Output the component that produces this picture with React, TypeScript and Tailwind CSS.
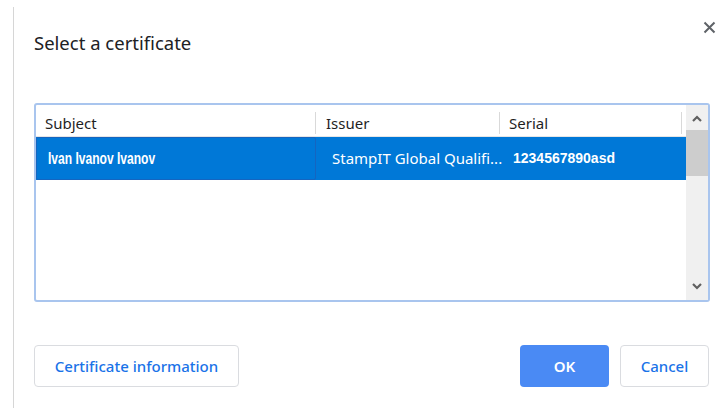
const ui = "font-['Noto_Sans',sans-serif]";

type Cert = { subject: string; issuer: string; serial: string };

const certs: Cert[] = [
  { subject: "Ivan Ivanov Ivanov", issuer: "StampIT Global Qualifi...", serial: "1234567890asd" },
];

function Chevron({ up }: { up?: boolean }) {
  return (
    <svg width="10" height="7" viewBox="0 0 10 7" className="text-[#606060]">
      <path
        d={up ? "M1 6 L5 2 L9 6" : "M1 1 L5 5 L9 1"}
        fill="none"
        stroke="currentColor"
        strokeWidth="2.2"
      />
    </svg>
  );
}

function CloseIcon() {
  return (
    <svg width="13" height="13" viewBox="0 0 13 13" className="text-[#5f6368]">
      <path d="M1.5 1.5 L11.5 11.5 M11.5 1.5 L1.5 11.5" stroke="currentColor" strokeWidth="2" />
    </svg>
  );
}

function CertTable() {
  return (
    <div className="flex h-[199px] w-[676px] overflow-hidden rounded-[3px] border-2 border-[#a9c5ee] bg-white">
      <div className="flex flex-1 flex-col">
        {/* header */}
        <div className={`flex h-[32px] items-center border-b border-[#e6e6e6] pt-[5px] text-[15px] text-[#1f1f1f] ${ui}`}>
          <div className="flex h-[22px] w-[280px] items-center border-r border-[#d9d9d9] pl-[9px]">Subject</div>
          <div className="flex h-[22px] w-[184px] items-center border-r border-[#d9d9d9] pl-[10px]">Issuer</div>
          <div className="flex h-[22px] w-[182px] items-center border-r border-[#d9d9d9] pl-[9px]">Serial</div>
        </div>
        {certs.map((c) => (
          <div key={c.serial} className="flex h-[43px] bg-[#0078d7] text-white">
            <div className="flex w-[280px] items-center rounded-[2px] border border-[#1565c0] pl-[11px] font-['Liberation_Sans',sans-serif] text-[16.5px] font-bold">
              {/* narrow bold face for the subject column */}
              <span className="inline-block origin-left scale-x-[0.73] whitespace-nowrap">{c.subject}</span>
            </div>
            <div className={`flex w-[184px] items-center whitespace-nowrap pl-[16px] text-[15px] ${ui}`}>{c.issuer}</div>
            <div className="flex w-[182px] items-center pl-[13px] font-['Liberation_Sans',sans-serif] text-[14px] font-bold">
              {c.serial}
            </div>
          </div>
        ))}
      </div>
      {/* scrollbar */}
      <div className="flex w-[22px] flex-col bg-[#f0f0f0]">
        <div className="flex h-[25px] items-center justify-center pt-[2px]">
          <Chevron up />
        </div>
        <div className="h-[46px] bg-[#cdcdcd]" />
        <div className="flex-1" />
        <div className="flex h-[24px] items-center justify-center pb-[4px]">
          <Chevron />
        </div>
      </div>
    </div>
  );
}

export default function App() {
  return (
    <div className={`flex h-[408px] w-[718px] bg-white ${ui}`}>
      <div className="ml-[13px] mt-[7px] w-px bg-[#d6d6d6]" />
      <div className="relative flex flex-1 flex-col pl-[20px]">
        <button type="button" className="absolute right-[2px] top-[21px]">
          <CloseIcon />
        </button>
        <h1 className="mt-[30px] text-[18.5px] leading-[26px] text-[#202124]">Select a certificate</h1>
        <div className="mt-[47px]">
          <CertTable />
        </div>
        <div className="mt-[43px] flex w-[675px] items-center">
          <button
            type="button"
            className="h-[42px] w-[205px] rounded-[4px] border border-[#dadce0] text-[15px] font-medium text-[#1a73e8]"
          >
            Certificate information
          </button>
          <div className="flex-1" />
          <button
            type="button"
            className="h-[42px] w-[89px] rounded-[4px] bg-[#4a8af4] text-[15px] font-semibold text-white"
          >
            OK
          </button>
          <button
            type="button"
            className="ml-[11px] h-[42px] w-[89px] rounded-[4px] border border-[#dadce0] text-[15px] font-medium text-[#1a73e8]"
          >
            Cancel
          </button>
        </div>
      </div>
    </div>
  );
}
